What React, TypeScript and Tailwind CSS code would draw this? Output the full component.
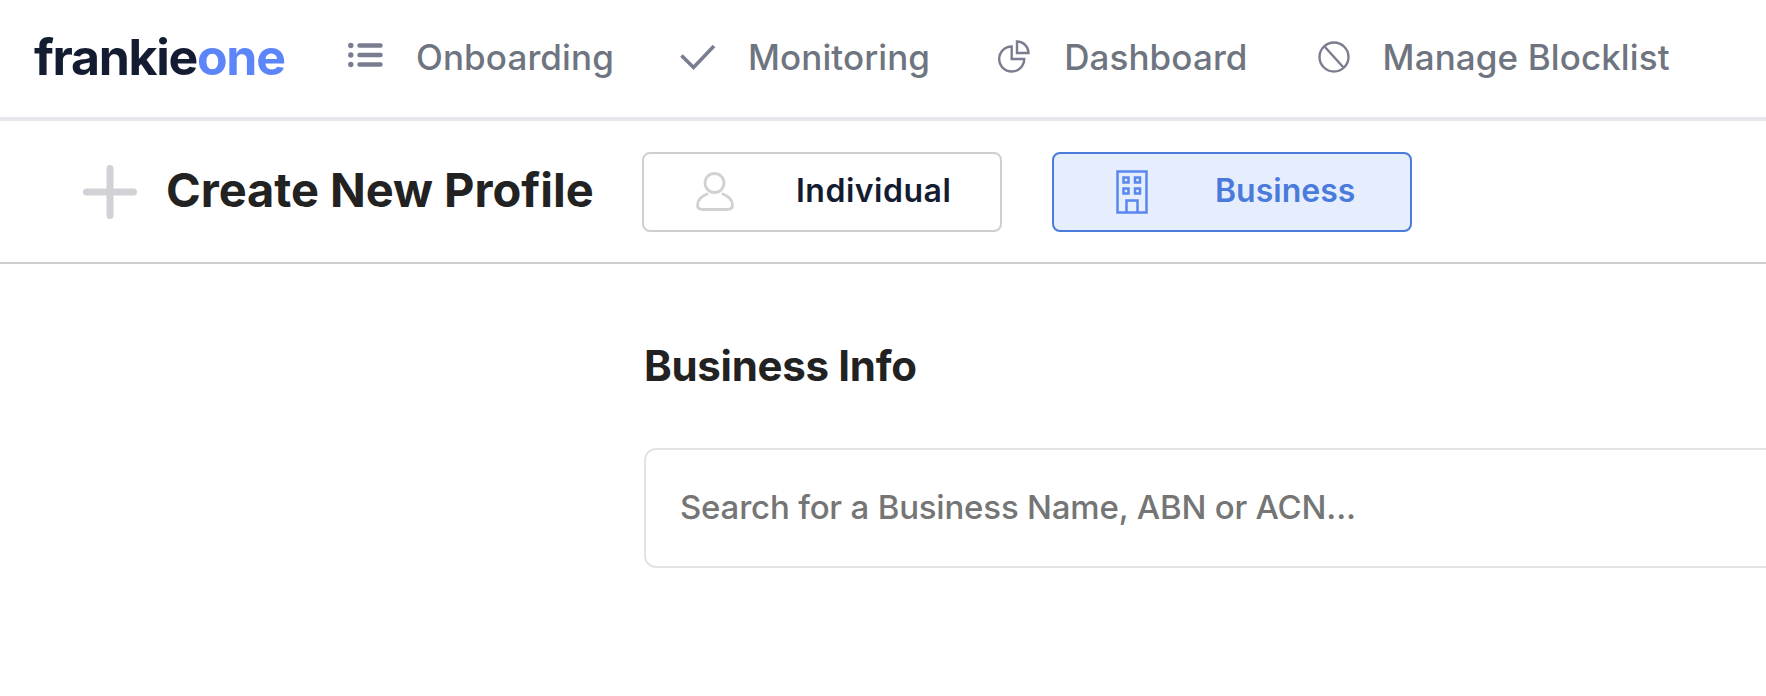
import React from "react";

function ListIcon() {
  return (
    <svg width="36" height="28" viewBox="0 0 36 28" fill="none" className="flex-none -mt-[4px]">
      <circle cx="2.800" cy="4.500" r="2.700" fill="#7a7d8f" />
      <circle cx="2.800" cy="14" r="2.700" fill="#7a7d8f" />
      <circle cx="2.800" cy="23.500" r="2.700" fill="#7a7d8f" />
      <path d="M11.500 4.500h21M11.500 14h21M11.500 23.500h21" stroke="#7a7d8f" strokeWidth="4.500" strokeLinecap="round" />
    </svg>
  );
}

function CheckIcon() {
  return (
    <svg width="36" height="28" viewBox="0 0 36 28" fill="none" className="flex-none">
      <path d="M1.500 12.500L13.500 24.500L34 3" stroke="#7a7d8f" strokeWidth="3.600" />
    </svg>
  );
}

function PieIcon() {
  return (
    <svg width="32" height="36" viewBox="0 0 32 36" fill="none" stroke="#7a7d8f" strokeWidth="2.400" className="flex-none">
      <path d="M13.700 7.500A12.500 12.500 0 1 0 26.200 20H13.700z" />
      <path d="M19 2.500A11.500 11.500 0 0 1 30.500 14H19z" />
    </svg>
  );
}

function BlockIcon() {
  return (
    <svg width="32" height="34" viewBox="0 0 32 34" fill="none" stroke="#7a7d8f" strokeWidth="2.400" className="flex-none">
      <circle cx="16" cy="17" r="14.500" />
      <path d="M6.500 6.500l19 21" />
    </svg>
  );
}

function PersonIcon() {
  return (
    <svg width="38" height="40" viewBox="0 0 38 40" fill="none" stroke="#d1d1d4" strokeWidth="2.800" className="flex-none">
      <circle cx="18.500" cy="11" r="9.500" />
      <path d="M12 21.500C6 24 1.500 28 1.500 33c0 3 2 4.500 5.500 4.500h24c3.500 0 5.500-1.500 5.500-4.500 0-5-4.500-9-10.500-11.500" />
    </svg>
  );
}

function BuildingIcon() {
  return (
    <svg width="32" height="44" viewBox="0 0 32 44" fill="none" stroke="#5a86f0" strokeWidth="2.500" className="flex-none">
      <rect x="1.500" y="1.500" width="29" height="41" />
      <rect x="7.500" y="7.500" width="5" height="5" />
      <rect x="19" y="7.500" width="5" height="5" />
      <rect x="7.500" y="18.500" width="5" height="5" />
      <rect x="19" y="18.500" width="5" height="5" />
      <path d="M10.500 42.500V30.500h11v12" />
    </svg>
  );
}

export default function App() {
  const navItems = [
    { label: "Onboarding", icon: <ListIcon />, cls: "gap-[32px]" },
    { label: "Monitoring", icon: <CheckIcon />, cls: "gap-[32px] ml-[66px]" },
    { label: "Dashboard", icon: <PieIcon />, cls: "gap-[34px] ml-[68px]" },
    { label: "Manage Blocklist", icon: <BlockIcon />, cls: "gap-[33px] ml-[70px]" },
  ];

  return (
    <div className="w-[1766px] h-[696px] overflow-hidden bg-white font-['Inter','Liberation_Sans',sans-serif]">
      {/* Top nav */}
      <div className="h-[121px] flex items-center pl-[34px] border-b-[4px] border-[#e5e7eb]">
        <div className="w-[250px] flex-none text-[50px] leading-none font-bold tracking-[-1.300px] text-[#131c31] -mt-1">
          frankie<span className="text-[#5b85f8]">one</span>
        </div>
        <div className="flex items-center ml-[64px] -mt-1">
          {navItems.map((item, index) => {
            return (
              <div key={index} className={"flex items-center " + item.cls}>
                {item.icon}
                <span className="mt-[2px] text-[35px] leading-none font-medium tracking-[0.100px] text-[#6f7580]">{item.label}</span>
              </div>
            );
          })}
        </div>
      </div>

      {/* Create profile bar */}
      <div className="h-[143px] flex items-center pl-[83px] border-b-2 border-[#cfcfcf]">
        <svg width="54" height="54" viewBox="0 0 54 54" className="flex-none mt-[1px]">
          <path d="M27 3.500v47M3.500 27h47" stroke="#d1d2d6" strokeWidth="7" strokeLinecap="round" />
        </svg>
        <h1 className="ml-[29px] w-[476px] flex-none text-[47px] leading-none font-bold tracking-[-0.050px] text-[#222222] -mt-1">Create New Profile</h1>
        <div className="w-[360px] h-[80px] flex-none flex items-center pl-[52px] rounded-lg border-2 border-[#cfcfcf] bg-white">
          <PersonIcon />
          <span className="ml-[62px] text-[32px] leading-none font-semibold tracking-[0.500px] text-[#131c31] -mt-0.5">Individual</span>
        </div>
        <div className="ml-[50px] w-[360px] h-[80px] flex-none flex items-center pl-[62px] rounded-lg border-2 border-[#4a7bdc] bg-[#e6eefd]">
          <BuildingIcon />
          <span className="ml-[67px] text-[32px] leading-none font-semibold text-[#4a7bdc] -mt-0.5">Business</span>
        </div>
      </div>

      {/* Business info */}
      <div className="pl-[644px]">
        <h2 className="mt-[77px] text-[42px] leading-[50px] font-bold tracking-[-0.300px] text-[#222222]">Business Info</h2>
        <div className="mt-[57px] w-[1300px] h-[120px] flex items-center pl-[34px] rounded-xl border-2 border-[#e3e3e3]">
          <span className="text-[33px] leading-none font-medium tracking-[-0.200px] text-[#757575] -mt-0.5">Search for a Business Name, ABN or ACN...</span>
        </div>
      </div>
    </div>
  );
}
